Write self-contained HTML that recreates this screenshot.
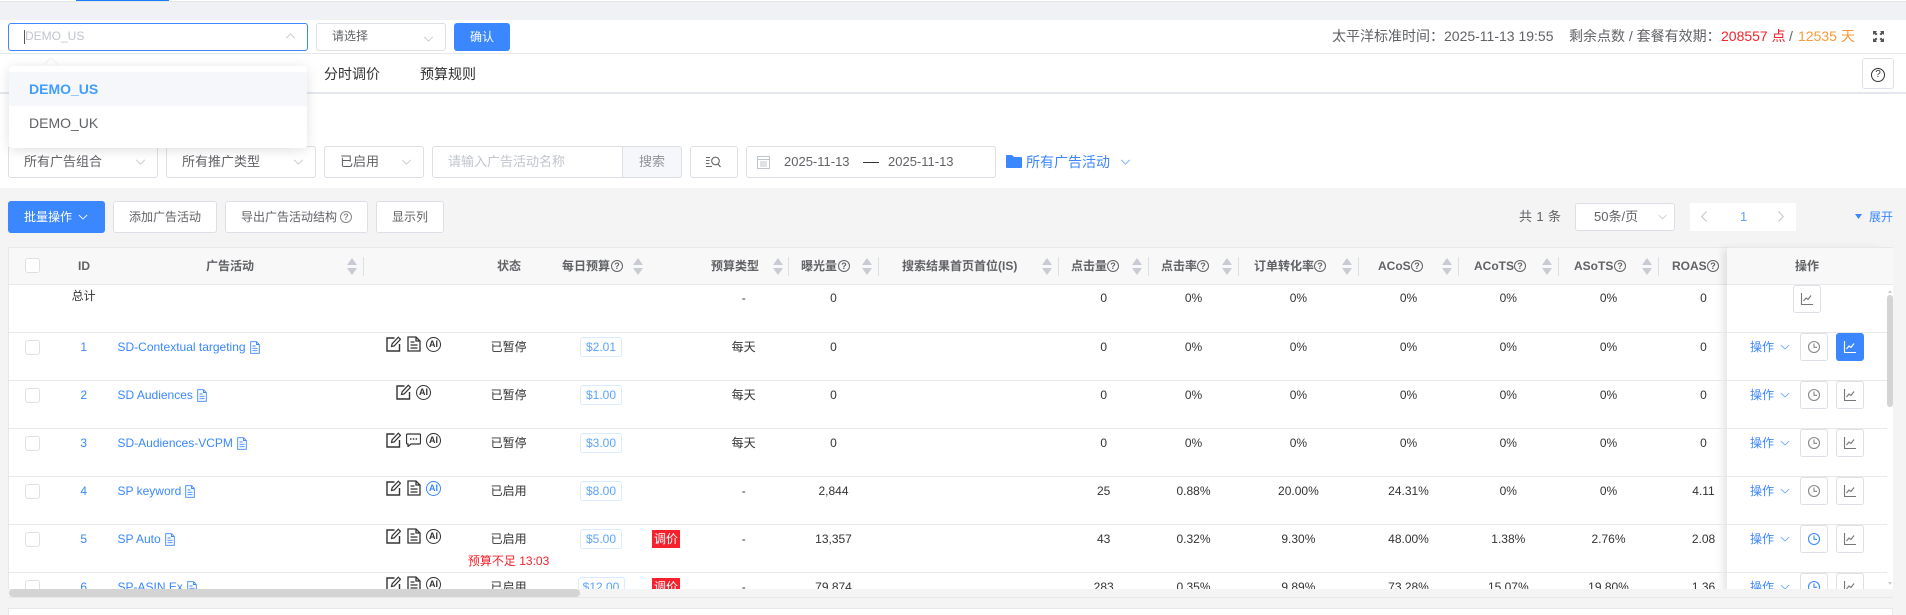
<!DOCTYPE html>
<html lang="zh-CN"><head><meta charset="utf-8"><title>广告活动</title>
<style>
*{box-sizing:border-box}
html,body{margin:0;padding:0;width:1906px;height:615px;overflow:hidden;background:#f4f4f4;font-family:"Liberation Sans","Noto Sans CJK SC",sans-serif;font-size:12px;color:#333}
.a,.t,.m,svg.i{position:absolute}
.t{line-height:20px;height:20px;white-space:nowrap}
.m{line-height:20px;height:20px;white-space:nowrap;transform:translateX(-50%);top:5px}
.box{position:absolute;background:#fff;border:1px solid #dcdfe6;border-radius:3px}
.g{color:#606266}.b{color:#3a87ff}
.f13{font-size:13px}.f14{font-size:14px}
.cl{font-family:"Liberation Sans","Noto Sans CJK TC",sans-serif}
.h{font-weight:bold;color:#606266;top:256px}
.q{position:absolute;width:12px;height:12px;border:1px solid #606266;border-radius:50%;font-size:9px;line-height:10px;text-align:center;color:#606266;font-weight:bold;top:260px}
.r{position:absolute;left:8px;width:1879px;height:48px}
.r::before{content:"";position:absolute;left:0;top:0;width:100%;height:1px;background:#e8e8e8}
.r0::before{display:none}
.r0 .m{top:4px}
.n{left:109.5px;top:5px;color:#3a87ff;display:flex;align-items:center;gap:4px}
.ai{position:absolute;top:5px;width:15px;height:15px;border:1.4px solid #333;border-radius:50%;font-size:9px;font-weight:bold;line-height:12px;text-align:center;color:#333}
.tag{position:absolute;top:5px;height:20px;border:1px solid #d9ecff;border-radius:3px;color:#5ba3ff;text-align:center;line-height:18px;background:#fff}
.red{position:absolute;left:644px;top:6px;width:28px;height:18px;background:#f5222d;color:#fff;text-align:center;line-height:18px}
.btn{position:absolute;top:1px;width:28px;height:28px;background:#fff;border:1px solid #dcdfe6;border-radius:3px}
.btn svg{position:absolute;left:6px;top:6px;width:14px;height:14px}
.btn.on{background:#3a87ff;border-color:#3a87ff}
.c1{left:75.7px;color:#3a87ff}.c2{left:500.6px}.c3{left:735.7px}.c4{left:825.5px}.c5{left:1095.7px}.c6{left:1185.5px}.c7{left:1290.4px}.c8{left:1400.5px}.c9{left:1500.3px}.c10{left:1600.5px}.c11{left:1695.5px}
.ck{position:absolute;left:17px;top:8px;width:15px;height:15px;border:1px solid #dcdfe6;border-radius:3px;background:#fff}
.op{left:1742px;top:5px;color:#3a87ff}
.sep{position:absolute;width:1px;height:19px;top:257px;background:#dcdfe6}
</style></head><body>
<svg width="0" height="0" style="position:absolute"><defs>
<symbol id="chev" viewBox="0 0 12 7"><path d="M1 1l5 5 5-5" fill="none" stroke="currentColor" stroke-width="1"/></symbol>
<symbol id="sort" viewBox="0 0 10 17"><path d="M5 0L10 7H0z M0 10H10L5 17z" fill="#c8cbd3"/></symbol>
<symbol id="ed" viewBox="0 0 15 16"><path d="M8.5 2H1v13h12.500V8" fill="none" stroke="#333" stroke-width="1.400"/><path d="M5.500 10.500l.6-2.700L12.300 1.200l2.200 2.100L8.200 9.900z" fill="none" stroke="#333" stroke-width="1.200"/></symbol>
<symbol id="doc" viewBox="0 0 14 16"><path d="M1 1h8l4 4v10H1z M9 1v4h4 M3.500 6h4 M3.500 9h7 M3.500 12h7" fill="none" stroke="#333" stroke-width="1.300"/></symbol>
<symbol id="dcb" viewBox="0 0 10 13"><path d="M.7.7h5.800l2.800 2.800v8.800H.7z M6.500.7v2.800h2.800 M2.500 5h3 M2.500 7.300h5 M2.500 9.700h5" fill="none" stroke="#3a87ff" stroke-width=".9"/></symbol>
<symbol id="chat" viewBox="0 0 15 14"><path d="M1.500 1h12a1 1 0 0 1 1 1v8a1 1 0 0 1-1 1H5l-3 2.500V11h-.5a1 1 0 0 1-1-1V2a1 1 0 0 1 1-1z" fill="none" stroke="#333" stroke-width="1.200"/><path d="M4 6h1.500M6.800 6h1.500M9.600 6h1.500" stroke="#333" stroke-width="1.500"/></symbol>
<symbol id="clk" viewBox="0 0 14 14"><circle cx="7" cy="7" r="5.500" fill="none" stroke="currentColor" stroke-width="1.100"/><path d="M7 3.500V7.300H10" fill="none" stroke="currentColor" stroke-width="1.100"/></symbol>
<symbol id="cht" viewBox="0 0 14 14"><path d="M1.500 1v11.500H13" fill="none" stroke="currentColor" stroke-width="1.100"/><path d="M3.500 9l2.500-3 2 1.500L11 3.500" fill="none" stroke="currentColor" stroke-width="1.100"/></symbol>
</defs></svg>

<!-- top strip -->
<div class="a" style="left:0;top:0;width:1906px;height:2px;background:#fff;border-bottom:1px solid #e6e6e6"></div>
<div class="a" style="left:76px;top:0;width:93px;height:1px;background:#1a7dff"></div>
<div class="a" style="left:0;top:2px;width:1906px;height:18px;background:#eff1f5"></div>
<div class="a" style="left:0;top:20px;width:1906px;height:33px;background:#fff"></div>
<div class="a" style="left:0;top:53px;width:1906px;height:1px;background:#e6e8ee"></div>
<div class="a" style="left:0;top:54px;width:1906px;height:38px;background:#fff"></div>
<div class="a" style="left:0;top:92px;width:1906px;height:2px;background:#e4e7ed"></div>
<div class="a" style="left:0;top:94px;width:1906px;height:94px;background:#fff"></div>

<!-- top selects -->
<div class="box" style="left:8px;top:23px;width:300px;height:28px;border-color:#3a87ff"></div>
<div class="a" style="left:24px;top:30px;width:1px;height:14px;background:#555"></div>
<div class="t" style="left:25px;top:26px;color:#c0c4cc">DEMO_US</div>
<svg class="i" style="left:285px;top:33px;width:11px;height:6px;color:#c0c4cc;transform:rotate(180deg)"><use href="#chev"/></svg>
<div class="box" style="left:316px;top:23px;width:130px;height:28px"></div>
<div class="t g" style="left:332px;top:26px">请选择</div>
<svg class="i" style="left:423px;top:36px;width:11px;height:6px;color:#c0c4cc"><use href="#chev"/></svg>
<div class="a" style="left:454px;top:23px;width:56px;height:28px;background:#3a87ff;border-radius:3px;color:#fff;text-align:center;line-height:28px">确认</div>

<div class="t g f14" style="left:1332px;top:26px">太平洋标准时间<span class="cl">：</span>2025-11-13 19:55</div>
<div class="t g f14" style="left:1569px;top:26px">剩余点数 / 套餐有效期<span class="cl">：</span></div>
<div class="t f14" style="left:1721px;top:26px;color:#f5222d">208557 点</div>
<div class="t g f14" style="left:1789px;top:26px">/</div>
<div class="t f14" style="left:1798px;top:26px;color:#fa9a3a">12535 天</div>
<svg class="i" style="left:1873px;top:31px;width:11px;height:11px" viewBox="0 0 11 11"><path d="M0 0h4L2.800 1.200 4.500 3 3 4.500 1.200 2.800 0 4z M11 0v4L9.800 2.800 8 4.500 6.500 3l1.700-1.800L7 0z M0 11V7l1.200 1.200L3 6.500 4.500 8 2.800 9.800 4 11z M11 11H7l1.200-1.200L6.500 8 8 6.500l1.800 1.700L11 7z" fill="#555"/></svg>

<!-- tabs -->
<div class="t f14" style="left:324px;top:64px;color:#303133">分时调价</div>
<div class="t f14" style="left:420px;top:64px;color:#303133">预算规则</div>
<div class="box" style="left:1862px;top:58px;width:32px;height:31px;border-color:#dfe1ea"></div>
<div class="a" style="left:1871px;top:68px;width:14px;height:14px;border:1.200px solid #333;border-radius:50%;font-size:10px;line-height:12px;text-align:center;color:#333">?</div>

<!-- filters -->
<div class="box" style="left:8px;top:146px;width:150px;height:32px"></div>
<div class="t g f13" style="left:24px;top:152px">所有广告组合</div>
<svg class="i" style="left:135px;top:159px;width:11px;height:6px;color:#c0c4cc"><use href="#chev"/></svg>
<div class="box" style="left:166px;top:146px;width:150px;height:32px"></div>
<div class="t g f13" style="left:182px;top:152px">所有推广类型</div>
<svg class="i" style="left:293px;top:159px;width:11px;height:6px;color:#c0c4cc"><use href="#chev"/></svg>
<div class="box" style="left:324px;top:146px;width:100px;height:32px"></div>
<div class="t g f13" style="left:340px;top:152px">已启用</div>
<svg class="i" style="left:401px;top:159px;width:11px;height:6px;color:#c0c4cc"><use href="#chev"/></svg>
<div class="box" style="left:432px;top:146px;width:250px;height:32px"></div>
<div class="t f13" style="left:448px;top:152px;color:#c0c4cc">请输入广告活动名称</div>
<div class="a" style="left:622px;top:146px;width:60px;height:32px;background:#f5f7fa;border:1px solid #dcdfe6;border-radius:0 3px 3px 0;color:#909399;font-size:13px;line-height:30px;text-align:center">搜索</div>
<div class="box" style="left:690px;top:146px;width:48px;height:32px"></div>
<svg class="i" style="left:706px;top:156px;width:15px;height:12px" viewBox="0 0 15 12"><path d="M0 1.500h4M0 4.500h3.500M0 7.500h3.500M0 10.500h6" stroke="#666" stroke-width="1"/><circle cx="9.500" cy="5" r="3.800" fill="none" stroke="#666" stroke-width="1.100"/><path d="M12 8l2.500 3" stroke="#666" stroke-width="1.100"/></svg>
<div class="box" style="left:746px;top:146px;width:250px;height:32px"></div>
<svg class="i" style="left:757px;top:155px;width:13px;height:14px" viewBox="0 0 13 14"><rect x=".5" y="1.500" width="12" height="12" fill="none" stroke="#c0c4cc"/><path d="M.5 4.500h12M3 7h7M3 9h7M3 11h7" stroke="#c0c4cc"/></svg>
<div class="t g f13" style="left:784px;top:152px">2025-11-13</div>
<div class="a" style="left:863px;top:162px;width:16px;height:1px;background:#333"></div>
<div class="t g f13" style="left:888px;top:152px">2025-11-13</div>
<svg class="i" style="left:1006px;top:155px;width:16px;height:13px" viewBox="0 0 16 13"><path d="M1 0h5l2 2h7a1 1 0 0 1 1 1v9a1 1 0 0 1-1 1H1a1 1 0 0 1-1-1V1a1 1 0 0 1 1-1z" fill="#3a87ff"/></svg>
<div class="t b f13" style="left:1026px;top:152px;font-size:14px">所有广告活动</div>
<svg class="i" style="left:1120px;top:159px;width:11px;height:6px;color:#6ea6ff"><use href="#chev"/></svg>

<!-- action row -->
<div class="a" style="left:8px;top:201px;width:97px;height:32px;background:#3a87ff;border-radius:3px"></div>
<div class="t" style="left:24px;top:207px;color:#fff">批量操作</div>
<svg class="i" style="left:78px;top:214px;width:10px;height:6px;color:#fff"><use href="#chev"/></svg>
<div class="box" style="left:113px;top:201px;width:104px;height:32px"></div>
<div class="t g" style="left:129px;top:207px">添加广告活动</div>
<div class="box" style="left:225px;top:201px;width:143px;height:32px"></div>
<div class="t g" style="left:241px;top:207px">导出广告活动结构</div>
<div class="q" style="left:340px;top:211px;border-color:#888;color:#888">?</div>
<div class="box" style="left:376px;top:201px;width:68px;height:32px"></div>
<div class="t g" style="left:392px;top:207px">显示列</div>

<!-- pagination -->
<div class="t g f13" style="left:1519px;top:207px;letter-spacing:.4px">共 1 条</div>
<div class="box" style="left:1575px;top:203px;width:100px;height:28px"></div>
<div class="t g" style="left:1594px;top:207px;font-size:13px">50条/页</div>
<svg class="i" style="left:1658px;top:214px;width:9px;height:6px;color:#c0c4cc"><use href="#chev"/></svg>
<div class="a" style="left:1690px;top:203px;width:106px;height:28px;background:#fff"></div>
<svg class="i" style="left:1701px;top:211px;width:6px;height:11px" viewBox="0 0 6 11"><path d="M5.500 .5L.7 5.500l4.800 5" fill="none" stroke="#c0c4cc"/></svg>
<div class="t f13" style="left:1740px;top:207px;color:#5ba3ff">1</div>
<svg class="i" style="left:1778px;top:211px;width:6px;height:11px" viewBox="0 0 6 11"><path d="M.5 .5l4.800 5-4.800 5" fill="none" stroke="#c0c4cc"/></svg>
<svg class="i" style="left:1855px;top:214px;width:7px;height:5px" viewBox="0 0 7 5"><path d="M0 0h7L3.500 5z" fill="#3a87ff"/></svg>
<div class="t b" style="left:1869px;top:207px">展开</div>

<!-- table -->
<div class="a" style="left:8px;top:247px;width:1885px;height:342px;background:#fff"></div>
<div class="a" style="left:8px;top:247px;width:1885px;height:38px;background:#f8f8f8;border-top:1px solid #e8e8e8;border-bottom:1px solid #e8e8e8"></div>
<div class="a" style="left:8px;top:247px;width:1px;height:350px;background:#e8e8e8"></div>

<div class="a" style="left:0;top:0;width:1906px;height:589px;overflow:hidden">
<!-- fixed column backdrop -->
<div class="a" style="left:1727px;top:247px;width:160px;height:360px;background:#fff;box-shadow:-6px 0 8px -2px rgba(0,0,0,.1)"><div style="height:38px;background:#f8f8f8;border-top:1px solid #e8e8e8;border-bottom:1px solid #e8e8e8;width:166px"></div></div>

<!-- header -->
<div class="a" style="left:25px;top:258px;width:15px;height:15px;border:1px solid #dcdfe6;border-radius:3px;background:#fff"></div>
<div class="t h" style="left:78px">ID</div>
<div class="t h" style="left:206px">广告活动</div>
<svg class="i" style="left:347px;top:258px;width:10px;height:17px"><use href="#sort"/></svg><div class="sep" style="left:363px"></div>
<div class="t h" style="left:497px">状态</div>
<div class="t h" style="left:562px">每日预算</div><div class="q" style="left:611px">?</div>
<svg class="i" style="left:633px;top:258px;width:10px;height:17px"><use href="#sort"/></svg>
<div class="t h" style="left:711px">预算类型</div>
<svg class="i" style="left:773px;top:258px;width:10px;height:17px"><use href="#sort"/></svg><div class="sep" style="left:788px"></div>
<div class="t h" style="left:801px">曝光量</div><div class="q" style="left:838px">?</div>
<svg class="i" style="left:862px;top:258px;width:10px;height:17px"><use href="#sort"/></svg><div class="sep" style="left:878px"></div>
<div class="t h" style="left:902px">搜索结果首页首位(IS)</div>
<svg class="i" style="left:1042px;top:258px;width:10px;height:17px"><use href="#sort"/></svg><div class="sep" style="left:1058px"></div>
<div class="t h" style="left:1071px">点击量</div><div class="q" style="left:1107px">?</div>
<svg class="i" style="left:1132px;top:258px;width:10px;height:17px"><use href="#sort"/></svg><div class="sep" style="left:1148px"></div>
<div class="t h" style="left:1161px">点击率</div><div class="q" style="left:1197px">?</div>
<svg class="i" style="left:1222px;top:258px;width:10px;height:17px"><use href="#sort"/></svg><div class="sep" style="left:1238px"></div>
<div class="t h" style="left:1254px">订单转化率</div><div class="q" style="left:1314px">?</div>
<svg class="i" style="left:1342px;top:258px;width:10px;height:17px"><use href="#sort"/></svg><div class="sep" style="left:1358px"></div>
<div class="t h" style="left:1378px">ACoS</div><div class="q" style="left:1411px">?</div>
<svg class="i" style="left:1442px;top:258px;width:10px;height:17px"><use href="#sort"/></svg><div class="sep" style="left:1458px"></div>
<div class="t h" style="left:1474px">ACoTS</div><div class="q" style="left:1514px">?</div>
<svg class="i" style="left:1542px;top:258px;width:10px;height:17px"><use href="#sort"/></svg><div class="sep" style="left:1558px"></div>
<div class="t h" style="left:1574px">ASoTS</div><div class="q" style="left:1614px">?</div>
<svg class="i" style="left:1642px;top:258px;width:10px;height:17px"><use href="#sort"/></svg><div class="sep" style="left:1658px"></div>
<div class="t h" style="left:1672px">ROAS</div><div class="q" style="left:1707px">?</div>
<div class="t h" style="left:1795px">操作</div>

<!-- total row -->
<div class="r r0" style="top:284px">
<div class="m" style="left:75.7px;top:2px">总计</div>
<div class="m c3">-</div><div class="m c4">0</div><div class="m c5">0</div><div class="m c6">0%</div><div class="m c7">0%</div><div class="m c8">0%</div><div class="m c9">0%</div><div class="m c10">0%</div><div class="m c11">0</div>
<div class="btn" style="left:1785px;top:1px;color:#777"><svg><use href="#cht"/></svg></div>
</div>

<!-- row 1 -->
<div class="r" style="top:332px">
<div class="ck"></div><div class="m c1">1</div>
<div class="t n">SD-Contextual targeting<svg width="10" height="13"><use href="#dcb"/></svg></div>
<svg class="i" style="left:378px;top:4px;width:15px;height:16px"><use href="#ed"/></svg>
<svg class="i" style="left:399px;top:4px;width:14px;height:16px"><use href="#doc"/></svg>
<div class="ai" style="left:418px">AI</div>
<div class="m c2">已暂停</div><div class="tag" style="left:572px;width:42px">$2.01</div>
<div class="m c3">每天</div><div class="m c4">0</div><div class="m c5">0</div><div class="m c6">0%</div><div class="m c7">0%</div><div class="m c8">0%</div><div class="m c9">0%</div><div class="m c10">0%</div><div class="m c11">0</div>
<div class="t op">操作</div><svg class="i" style="left:1772px;top:12px;width:10px;height:6px;color:#6ea6ff"><use href="#chev"/></svg>
<div class="btn" style="left:1792px;color:#888"><svg><use href="#clk"/></svg></div>
<div class="btn on" style="left:1828px;color:#fff"><svg><use href="#cht"/></svg></div>
</div>

<!-- row 2 -->
<div class="r" style="top:380px">
<div class="ck"></div><div class="m c1">2</div>
<div class="t n">SD Audiences<svg width="10" height="13"><use href="#dcb"/></svg></div>
<svg class="i" style="left:388px;top:4px;width:15px;height:16px"><use href="#ed"/></svg>
<div class="ai" style="left:408px">AI</div>
<div class="m c2">已暂停</div><div class="tag" style="left:572px;width:42px">$1.00</div>
<div class="m c3">每天</div><div class="m c4">0</div><div class="m c5">0</div><div class="m c6">0%</div><div class="m c7">0%</div><div class="m c8">0%</div><div class="m c9">0%</div><div class="m c10">0%</div><div class="m c11">0</div>
<div class="t op">操作</div><svg class="i" style="left:1772px;top:12px;width:10px;height:6px;color:#6ea6ff"><use href="#chev"/></svg>
<div class="btn" style="left:1792px;color:#888"><svg><use href="#clk"/></svg></div>
<div class="btn" style="left:1828px;color:#777"><svg><use href="#cht"/></svg></div>
</div>

<!-- row 3 -->
<div class="r" style="top:428px">
<div class="ck"></div><div class="m c1">3</div>
<div class="t n">SD-Audiences-VCPM<svg width="10" height="13"><use href="#dcb"/></svg></div>
<svg class="i" style="left:378px;top:4px;width:15px;height:16px"><use href="#ed"/></svg>
<svg class="i" style="left:398px;top:5px;width:15px;height:14px"><use href="#chat"/></svg>
<div class="ai" style="left:418px">AI</div>
<div class="m c2">已暂停</div><div class="tag" style="left:572px;width:42px">$3.00</div>
<div class="m c3">每天</div><div class="m c4">0</div><div class="m c5">0</div><div class="m c6">0%</div><div class="m c7">0%</div><div class="m c8">0%</div><div class="m c9">0%</div><div class="m c10">0%</div><div class="m c11">0</div>
<div class="t op">操作</div><svg class="i" style="left:1772px;top:12px;width:10px;height:6px;color:#6ea6ff"><use href="#chev"/></svg>
<div class="btn" style="left:1792px;color:#888"><svg><use href="#clk"/></svg></div>
<div class="btn" style="left:1828px;color:#777"><svg><use href="#cht"/></svg></div>
</div>

<!-- row 4 -->
<div class="r" style="top:476px">
<div class="ck"></div><div class="m c1">4</div>
<div class="t n">SP keyword<svg width="10" height="13"><use href="#dcb"/></svg></div>
<svg class="i" style="left:378px;top:4px;width:15px;height:16px"><use href="#ed"/></svg>
<svg class="i" style="left:399px;top:4px;width:14px;height:16px"><use href="#doc"/></svg>
<div class="ai" style="left:418px;color:#3a87ff;border-color:#3a87ff">AI</div>
<div class="m c2">已启用</div><div class="tag" style="left:572px;width:42px">$8.00</div>
<div class="m c3">-</div><div class="m c4">2,844</div><div class="m c5">25</div><div class="m c6">0.88%</div><div class="m c7">20.00%</div><div class="m c8">24.31%</div><div class="m c9">0%</div><div class="m c10">0%</div><div class="m c11">4.11</div>
<div class="t op">操作</div><svg class="i" style="left:1772px;top:12px;width:10px;height:6px;color:#6ea6ff"><use href="#chev"/></svg>
<div class="btn" style="left:1792px;color:#888"><svg><use href="#clk"/></svg></div>
<div class="btn" style="left:1828px;color:#777"><svg><use href="#cht"/></svg></div>
</div>

<!-- row 5 -->
<div class="r" style="top:524px">
<div class="ck"></div><div class="m c1">5</div>
<div class="t n">SP Auto<svg width="10" height="13"><use href="#dcb"/></svg></div>
<svg class="i" style="left:378px;top:4px;width:15px;height:16px"><use href="#ed"/></svg>
<svg class="i" style="left:399px;top:4px;width:14px;height:16px"><use href="#doc"/></svg>
<div class="ai" style="left:418px">AI</div>
<div class="m c2">已启用</div><div class="m c2" style="top:27px;color:#f5222d">预算不足 13:03</div>
<div class="tag" style="left:572px;width:42px">$5.00</div><div class="red">调价</div>
<div class="m c3">-</div><div class="m c4">13,357</div><div class="m c5">43</div><div class="m c6">0.32%</div><div class="m c7">9.30%</div><div class="m c8">48.00%</div><div class="m c9">1.38%</div><div class="m c10">2.76%</div><div class="m c11">2.08</div>
<div class="t op">操作</div><svg class="i" style="left:1772px;top:12px;width:10px;height:6px;color:#6ea6ff"><use href="#chev"/></svg>
<div class="btn" style="left:1792px;color:#3a87ff"><svg><use href="#clk"/></svg></div>
<div class="btn" style="left:1828px;color:#777"><svg><use href="#cht"/></svg></div>
</div>

<!-- row 6 -->
<div class="r" style="top:572px">
<div class="ck"></div><div class="m c1">6</div>
<div class="t n">SP-ASIN Ex<svg width="10" height="13"><use href="#dcb"/></svg></div>
<svg class="i" style="left:378px;top:4px;width:15px;height:16px"><use href="#ed"/></svg>
<svg class="i" style="left:399px;top:4px;width:14px;height:16px"><use href="#doc"/></svg>
<div class="ai" style="left:418px">AI</div>
<div class="m c2">已启用</div><div class="tag" style="left:569.500px;width:47px">$12.00</div><div class="red">调价</div>
<div class="m c3">-</div><div class="m c4">79,874</div><div class="m c5">283</div><div class="m c6">0.35%</div><div class="m c7">9.89%</div><div class="m c8">73.28%</div><div class="m c9">15.07%</div><div class="m c10">19.80%</div><div class="m c11">1.36</div>
<div class="t op">操作</div><svg class="i" style="left:1772px;top:12px;width:10px;height:6px;color:#6ea6ff"><use href="#chev"/></svg>
<div class="btn" style="left:1792px;color:#3a87ff"><svg><use href="#clk"/></svg></div>
<div class="btn" style="left:1828px;color:#777"><svg><use href="#cht"/></svg></div>
</div>
</div>

<!-- scrollbars -->
<div class="a" style="left:1887px;top:285px;width:6px;height:304px;background:#fff"></div>
<div class="a" style="left:1887px;top:295px;width:6px;height:112px;background:#d4d4d4;border-radius:3px"></div>
<div class="a" style="left:1888px;top:288px;width:0;height:0;border:2px solid transparent;border-bottom:3px solid #ccc"></div>
<div class="a" style="left:1888px;top:582px;width:0;height:0;border:2px solid transparent;border-top:3px solid #ccc"></div>
<div class="a" style="left:8px;top:589px;width:1885px;height:8px;background:#f4f4f4"></div>
<div class="a" style="left:9px;top:589px;width:571px;height:8px;background:#d4d4d4;border-radius:4px"></div>
<div class="a" style="left:8px;top:597px;width:1885px;height:1px;background:#e8e8e8"></div>
<div class="a" style="left:8px;top:608px;width:1885px;height:7px;background:#fff;border:1px solid #e6e8ee;border-bottom:0"></div>

<!-- dropdown -->
<div class="a" style="left:46px;top:61px;width:10px;height:10px;background:#fff;transform:rotate(45deg);box-shadow:-1px -1px 2px rgba(0,0,0,.06)"></div>
<div class="a" style="left:9px;top:66px;width:298px;height:82px;background:#fff;border-radius:3px;box-shadow:0 2px 12px rgba(0,0,0,.12)">
<div class="a" style="left:0;top:6px;width:298px;height:34px;background:#f5f7fa"></div>
<div class="t f14" style="left:20px;top:13px;font-weight:bold;color:#409eff">DEMO_US</div>
<div class="t f14 g" style="left:20px;top:47px">DEMO_UK</div>
</div>
</body></html>
